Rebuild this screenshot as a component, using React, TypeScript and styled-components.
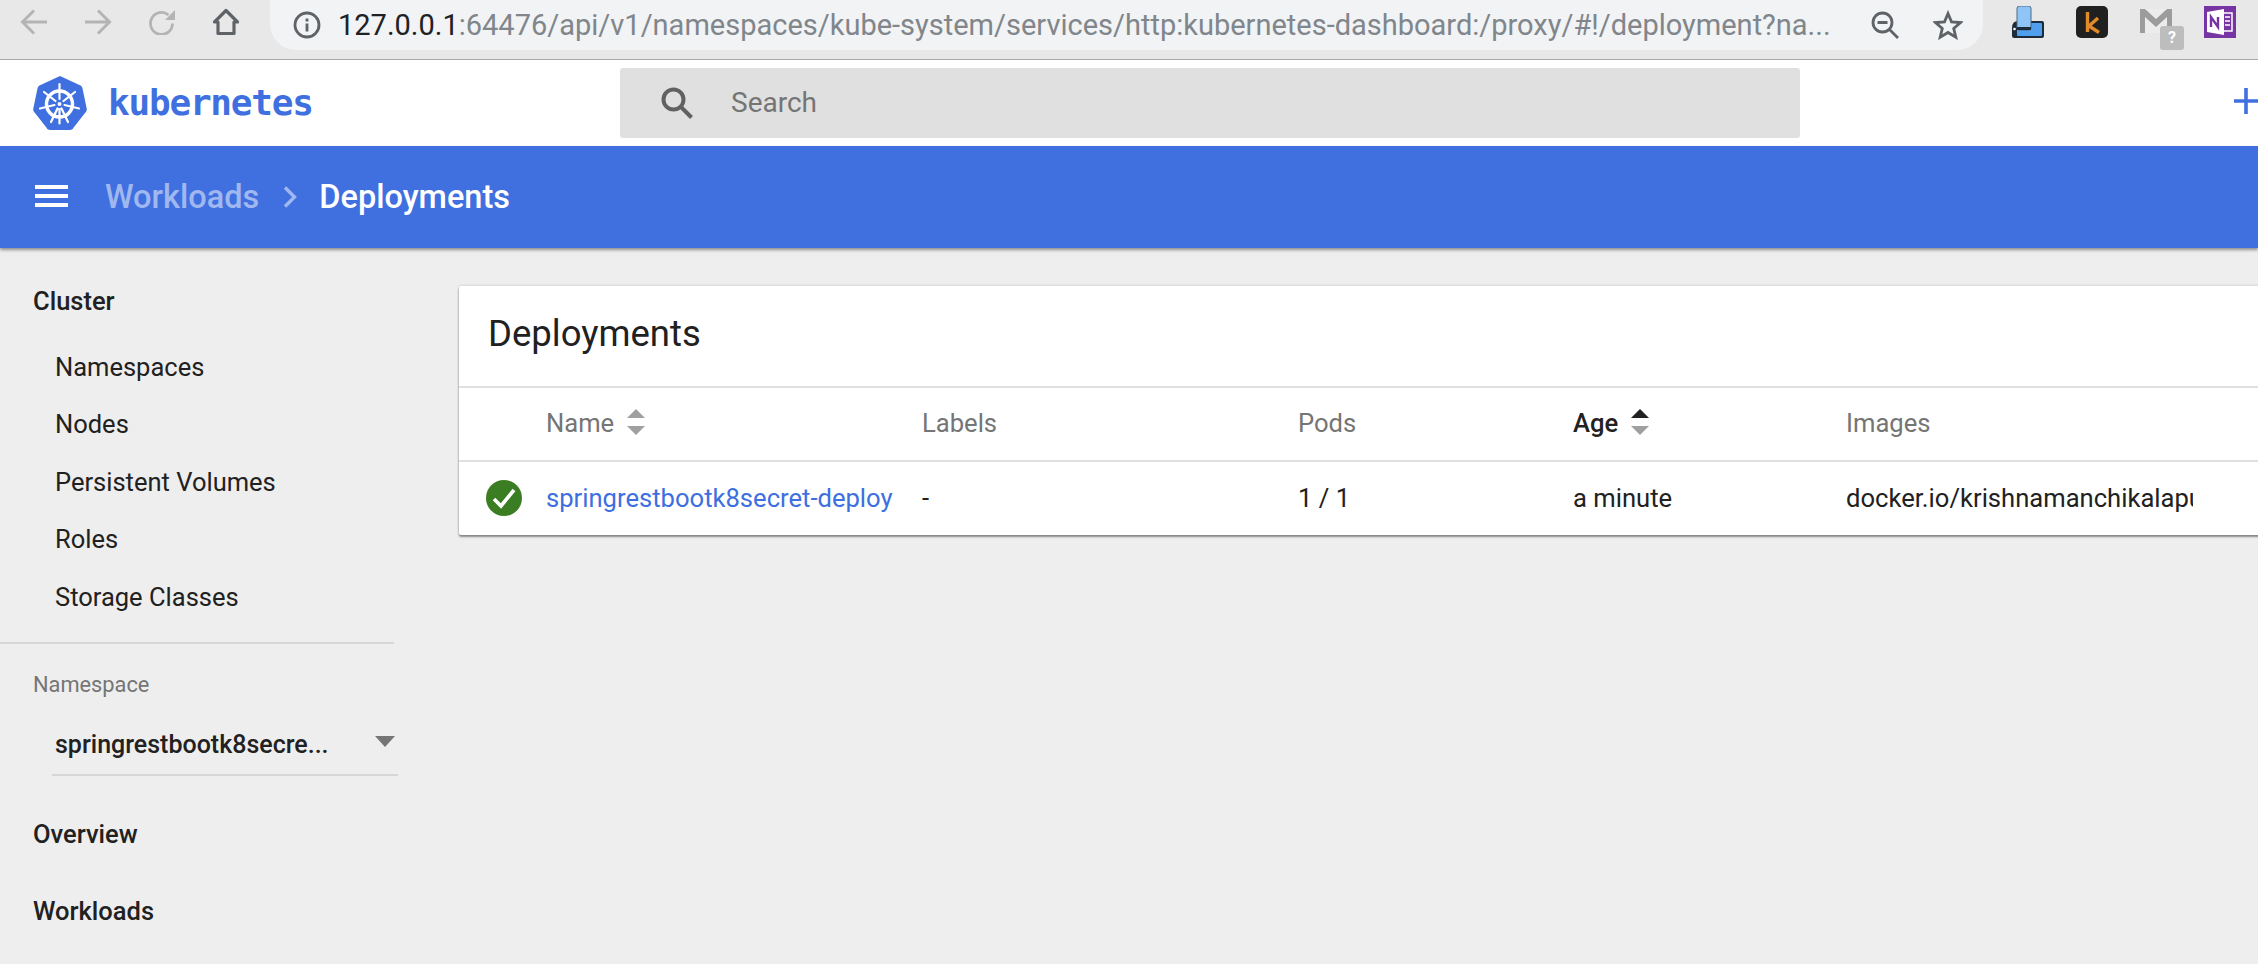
import React from "react";
import styled, { createGlobalStyle } from "styled-components";

const GlobalStyle = createGlobalStyle`
  html, body {
    margin: 0;
    padding: 0;
    height: 100%;
    overflow: hidden;
    background: #eeeeee;
  }
  body {
    font-family: Roboto, "Liberation Sans", sans-serif;
    color: #212121;
  }
`;

const Page = styled.div`
  width: 2258px;
  height: 964px;
  display: flex;
  flex-direction: column;
  overflow: hidden;
`;

/* browser chrome */
const BrowserBar = styled.div`
  height: 60px;
  flex: none;
  box-sizing: border-box;
  display: flex;
  align-items: flex-start;
  padding-left: 2px;
  background: #e8e8e8;
  border-bottom: 1px solid #a8a8a8;
`;

const NavButton = styled.div<{ $dark?: boolean }>`
  width: 64px;
  height: 44px;
  flex: none;
  display: flex;
  align-items: center;
  justify-content: center;
  color: ${(p) => (p.$dark ? "#5f6368" : "#b4b4b4")};
`;

const UrlBar = styled.div`
  width: 1713px;
  height: 50px;
  flex: none;
  margin-left: 12px;
  display: flex;
  align-items: center;
  padding: 0 12px 0 23px;
  box-sizing: border-box;
  gap: 17px;
  background: #f1f3f4;
  border-radius: 0 0 26px 26px;
  color: #5f6368;
`;

const UrlText = styled.div`
  flex: 1;
  font-size: 29px;
  color: #80868b;
  white-space: nowrap;
  overflow: hidden;
  b {
    font-weight: 400;
    color: #202124;
  }
`;

const UrlAction = styled.div`
  width: 46px;
  display: flex;
  justify-content: center;
  color: #5f6368;
`;

const Extensions = styled.div`
  display: flex;
  gap: 32px;
  margin-left: 29px;
  padding-top: 6px;
`;

const Extension = styled.div`
  position: relative;
  width: 32px;
  height: 32px;
`;

const ExtensionBadge = styled.span`
  position: absolute;
  left: 20px;
  top: 20px;
  width: 24px;
  height: 24px;
  border-radius: 3px;
  background: #bdbdbd;
  color: #fff;
  font-size: 16px;
  font-weight: 700;
  text-align: center;
  line-height: 24px;
`;

/* dashboard header */
const TopBar = styled.header`
  height: 86px;
  flex: none;
  display: flex;
  align-items: center;
  background: #fff;
  padding-left: 33px;
`;

const Brand = styled.div`
  width: 587px;
  flex: none;
  display: flex;
  align-items: center;
  gap: 21px;
  color: #4070e0;
`;

const BrandName = styled.span`
  font-family: "DejaVu Sans Mono", monospace;
  font-size: 36px;
  font-weight: 700;
  letter-spacing: -1.2px;
  line-height: 1;
`;

const SearchBox = styled.div`
  width: 1180px;
  height: 70px;
  flex: none;
  margin-top: -1px;
  display: flex;
  align-items: center;
  gap: 38px;
  padding-left: 41px;
  box-sizing: border-box;
  background: #e0e0e0;
  border-radius: 3px;
  color: #757575;
  font-size: 28px;
`;

const AddButton = styled.div`
  margin-left: auto;
  margin-top: -4px;
  display: flex;
`;

const ActionBar = styled.div`
  height: 102px;
  flex: none;
  display: flex;
  align-items: center;
  padding-left: 35px;
  background: #4070e0;
  color: #fff;
  box-shadow: 0 2px 3px rgba(0, 0, 0, 0.4);
  position: relative;
`;

const Crumb = styled.span<{ $muted?: boolean }>`
  font-size: 32.5px;
  font-weight: 500;
  color: ${(p) => (p.$muted ? "#a0b8ef" : "#fff")};
`;

const CrumbSeparator = styled.span`
  display: flex;
  margin: 0 22px 0 24px;
`;

const MenuButton = styled.div`
  display: flex;
  width: 70px;
  margin-top: -3px;
`;

/* body */
const Main = styled.div`
  flex: 1;
  display: flex;
  min-height: 0;
`;

const Sidebar = styled.nav`
  width: 459px;
  flex: none;
  padding-top: 24px;
  box-sizing: border-box;
`;

const SectionLink = styled.div<{ $tall?: boolean }>`
  height: ${(p) => (p.$tall ? "77px" : "58px")};
  display: flex;
  align-items: center;
  padding-left: 33px;
  font-size: 25.5px;
  font-weight: 500;
`;

const NavList = styled.div`
  margin-top: 8px;
`;

const NavItem = styled.div`
  height: 57.5px;
  display: flex;
  align-items: center;
  padding-left: 55px;
  font-size: 25.5px;
`;

const Divider = styled.div`
  width: 394px;
  height: 2px;
  margin-top: 16px;
  background: #d6d6d6;
`;

const NamespaceLabel = styled.div`
  margin-top: 27px;
  padding-left: 33px;
  font-size: 21.8px;
  line-height: 28px;
  color: #757575;
`;

const NamespaceSelect = styled.div`
  width: 346px;
  height: 60px;
  margin: 17px 0 20px 52px;
  box-sizing: border-box;
  display: flex;
  align-items: center;
  justify-content: space-between;
  padding: 0 3px 0 3px;
  border-bottom: 2px solid #d6d6d6;
  font-size: 25px;
  font-weight: 500;
`;

const SelectArrow = styled.span`
  width: 0;
  height: 0;
  margin-bottom: 6px;
  border-left: 10px solid transparent;
  border-right: 10px solid transparent;
  border-top: 11px solid #757575;
`;

const Card = styled.section`
  width: 1850px;
  height: 249px;
  flex: none;
  margin-top: 38px;
  background: #fff;
  border-radius: 2px;
  box-shadow: 0 2px 2px rgba(0, 0, 0, 0.4), 0 0 3px rgba(0, 0, 0, 0.2);
`;

const CardTitle = styled.h2`
  height: 102px;
  margin: 0;
  padding: 0 0 6px 29px;
  box-sizing: border-box;
  display: flex;
  align-items: center;
  border-bottom: 2px solid #e0e0e0;
  font-size: 36.5px;
  font-weight: 400;
`;

const Row = styled.div<{ $head?: boolean }>`
  height: 74px;
  padding-bottom: 2px;
  display: grid;
  grid-template-columns: 87px 376px 376px 275px 273px 347px;
  align-items: center;
  border-bottom: ${(p) => (p.$head ? "2px solid #e0e0e0" : "none")};
  box-sizing: border-box;
`;

const Cell = styled.div<{ $head?: boolean; $active?: boolean }>`
  display: flex;
  align-items: center;
  gap: 13px;
  overflow: hidden;
  white-space: nowrap;
  font-size: 25.6px;
  font-weight: ${(p) => (p.$active ? 500 : 400)};
  color: ${(p) => (p.$head && !p.$active ? "#757575" : "#212121")};
`;

const NameLink = styled.a`
  color: #3d6fe0;
`;

const StatusCell = styled.div`
  display: flex;
  justify-content: flex-end;
  padding-right: 24px;
`;

const SortSvg = styled.svg`
  flex: none;
  margin-top: -2px;
`;

const SortIcon = ({ active }: { active?: boolean }) => (
  <SortSvg width="18" height="26" viewBox="0 0 18 26">
    <path d="M9 0 L18 9 H0 Z" fill={active ? "#212121" : "#a0a0a0"} />
    <path d="M9 26 L18 17 H0 Z" fill="#a0a0a0" />
  </SortSvg>
);

const BackIcon = () => (
  <svg width="28" height="26" viewBox="0 0 28 26" fill="none" stroke="currentColor" strokeWidth="3">
    <path d="M27 13 H3 M14 1.500 L2.500 13 L14 24.500" />
  </svg>
);

const ForwardIcon = () => (
  <svg width="28" height="26" viewBox="0 0 28 26" fill="none" stroke="currentColor" strokeWidth="3">
    <path d="M1 13 H25 M14 1.500 L25.500 13 L14 24.500" />
  </svg>
);

const ReloadIcon = () => (
  <svg width="28" height="26" viewBox="0 0 28 26">
    <path d="M20.500 6 A11 11 0 1 0 24.500 14.500" fill="none" stroke="currentColor" strokeWidth="2.800" />
    <path d="M27 1 V11 H17 Z" fill="currentColor" />
  </svg>
);

const HomeIcon = () => (
  <svg width="28" height="28" viewBox="0 0 28 28" fill="none" stroke="currentColor" strokeWidth="3.200" strokeLinejoin="round">
    <path d="M14 2.500 L25.500 14 H22 V25.500 H6 V14 H2.500 Z" />
  </svg>
);

const InfoIcon = () => (
  <svg width="28" height="28" viewBox="0 0 28 28">
    <circle cx="14" cy="14" r="12" fill="none" stroke="currentColor" strokeWidth="2.800" />
    <rect x="12.600" y="12.500" width="2.800" height="8" fill="currentColor" />
    <rect x="12.600" y="7.500" width="2.800" height="3" fill="currentColor" />
  </svg>
);

const ZoomOutIcon = () => (
  <svg width="28" height="28" viewBox="0 0 28 28" fill="none" stroke="currentColor" strokeWidth="2.800">
    <circle cx="11.500" cy="11.500" r="9.500" />
    <path d="M6.500 11.500 H16.500 M18.500 18.500 L27 27" />
  </svg>
);

const StarIcon = () => (
  <svg width="30" height="30" viewBox="0 0 30 30" fill="none" stroke="currentColor" strokeWidth="2.800">
    <path d="M15 3.500 L18.500 11.800 L27.500 12.500 L20.700 18.400 L22.800 27.200 L15 22.500 L7.200 27.200 L9.300 18.400 L2.500 12.500 L11.500 11.800 Z" />
  </svg>
);

const SearchIcon = () => (
  <svg width="32" height="32" viewBox="0 0 32 32" fill="none" stroke="currentColor" strokeWidth="4" color="#616161">
    <circle cx="12.500" cy="12.500" r="10" />
    <path d="M20 20 L30.500 30.500" />
  </svg>
);

const PlusIcon = () => (
  <svg width="24" height="26" viewBox="0 0 24 26" fill="none" stroke="#4070e0" strokeWidth="3.600">
    <path d="M0 13 H24 M12 0 V26" />
  </svg>
);

const MenuIcon = () => (
  <svg width="33" height="22" viewBox="0 0 33 22" fill="#fff">
    <rect y="0" width="33" height="4" />
    <rect y="9" width="33" height="4" />
    <rect y="18" width="33" height="4" />
  </svg>
);

const CrumbChevron = () => (
  <svg width="14" height="22" viewBox="0 0 14 22" fill="none" stroke="#a0b8ef" strokeWidth="3.400">
    <path d="M2 1.500 L11.500 11 L2 20.500" />
  </svg>
);

const KubeLogo = () => (
  <svg width="54" height="54" viewBox="0 0 54 54">
    <path d="M27 0 L47.500 9.500 Q49 10.200 49.400 12 L53.800 33 Q54 34.500 53 35.800 L41 51 Q39.800 54 37.500 54 H16.500 Q14.200 54 13 51 L1 35.800 Q0 34.500 .2 33 L4.600 12 Q5 10.200 6.500 9.500 Z" fill="#4070e0" />
    <g fill="none" stroke="#fff" strokeLinecap="round">
      <circle cx="26.500" cy="28" r="13" strokeWidth="3.400" />
      <path strokeWidth="2.200" d="M26.500 8 V23 M26.500 33 V47.500 M11 16 L22.500 25 M42 16 L30.500 25 M7 32.500 L21.500 29 M46 32.500 L31.500 29 M18 46 L24.500 32.500 M35 46 L28.500 32.500" />
    </g>
    <circle cx="26.500" cy="28" r="2" fill="#fff" />
  </svg>
);

const StatusIcon = () => (
  <svg width="36" height="36" viewBox="0 0 36 36">
    <circle cx="18" cy="18" r="18" fill="#3a7d22" />
    <path d="M8 19 L15 26 L28 10" fill="none" stroke="#fff" strokeWidth="3.600" />
  </svg>
);

const DeviceExtension = () => (
  <svg width="32" height="32" viewBox="0 0 32 32">
    <path d="M0 22 Q0 15 6 15 H30 Q32 15 32 17 V30 Q32 32 30 32 H2 Q0 32 0 30 Z" fill="#1d2c3b" />
    <rect x="5" y="17" width="25" height="13" rx="1" fill="#4f9fee" />
    <rect x="5" y="0" width="14" height="24" rx="2.500" fill="#8fc4f6" stroke="#4d6a85" strokeWidth="1" />
    <rect x="5" y="21" width="14" height="3" fill="#1d2c3b" />
    <circle cx="2.500" cy="23" r="1.300" fill="#fff" />
  </svg>
);

const KExtension = () => (
  <svg width="32" height="32" viewBox="0 0 32 32">
    <rect width="32" height="32" rx="5" fill="#202020" />
    <path d="M11.500 6 V26 M22 12 L13 20 L23 26.500" fill="none" stroke="#e08a28" strokeWidth="3.400" />
  </svg>
);

const GmailSvg = styled.svg`
  display: block;
  margin-top: 3px;
`;

const GmailExtension = () => (
  <GmailSvg width="32" height="24" viewBox="0 0 32 24">
    <rect width="32" height="24" fill="#ececec" />
    <path d="M0 0 H5 L16 10 L27 0 H32 V24 H27 V8 L16 18 L5 8 V24 H0 Z" fill="#9c9c9c" />
  </GmailSvg>
);

const NoteExtension = () => (
  <svg width="32" height="32" viewBox="0 0 32 32">
    <rect width="32" height="32" fill="#7635a3" />
    <path d="M18 7 H28 V25 H18 Z" fill="none" stroke="#fff" strokeWidth="1.500" />
    <path d="M21 11 H26 M21 15 H26 M21 19 H26" stroke="#fff" strokeWidth="1.500" />
    <path d="M3 6 L20 3 V29 L3 26 Z" fill="#fff" />
    <path d="M7 21 V11 L14 21 V11" fill="none" stroke="#7635a3" strokeWidth="2.400" />
  </svg>
);

export default function App() {
  return (
    <Page>
      <GlobalStyle />
      <BrowserBar>
        <NavButton><BackIcon /></NavButton>
        <NavButton><ForwardIcon /></NavButton>
        <NavButton><ReloadIcon /></NavButton>
        <NavButton $dark><HomeIcon /></NavButton>
        <UrlBar>
          <InfoIcon />
          <UrlText>
            <b>127.0.0.1</b>:64476/api/v1/namespaces/kube-system/services/http:kubernetes-dashboard:/proxy/#!/deployment?na...
          </UrlText>
          <UrlAction><ZoomOutIcon /></UrlAction>
          <UrlAction><StarIcon /></UrlAction>
        </UrlBar>
        <Extensions>
          <Extension><DeviceExtension /></Extension>
          <Extension><KExtension /></Extension>
          <Extension>
            <GmailExtension />
            <ExtensionBadge>?</ExtensionBadge>
          </Extension>
          <Extension><NoteExtension /></Extension>
        </Extensions>
      </BrowserBar>

      <TopBar>
        <Brand>
          <KubeLogo />
          <BrandName>kubernetes</BrandName>
        </Brand>
        <SearchBox>
          <SearchIcon />
          Search
        </SearchBox>
        <AddButton><PlusIcon /></AddButton>
      </TopBar>

      <ActionBar>
        <MenuButton><MenuIcon /></MenuButton>
        <Crumb $muted>Workloads</Crumb>
        <CrumbSeparator><CrumbChevron /></CrumbSeparator>
        <Crumb>Deployments</Crumb>
      </ActionBar>

      <Main>
        <Sidebar>
          <SectionLink>Cluster</SectionLink>
          <NavList>
            <NavItem>Namespaces</NavItem>
            <NavItem>Nodes</NavItem>
            <NavItem>Persistent Volumes</NavItem>
            <NavItem>Roles</NavItem>
            <NavItem>Storage Classes</NavItem>
          </NavList>
          <Divider />
          <NamespaceLabel>Namespace</NamespaceLabel>
          <NamespaceSelect>
            springrestbootk8secre...
            <SelectArrow />
          </NamespaceSelect>
          <SectionLink $tall>Overview</SectionLink>
          <SectionLink $tall>Workloads</SectionLink>
        </Sidebar>
        <Card>
          <CardTitle>Deployments</CardTitle>
          <Row $head>
            <div />
            <Cell $head>Name <SortIcon /></Cell>
            <Cell $head>Labels</Cell>
            <Cell $head>Pods</Cell>
            <Cell $head $active>Age <SortIcon active /></Cell>
            <Cell $head>Images</Cell>
          </Row>
          <Row>
            <StatusCell><StatusIcon /></StatusCell>
            <Cell><NameLink>springrestbootk8secret-deploy</NameLink></Cell>
            <Cell>-</Cell>
            <Cell>1 / 1</Cell>
            <Cell>a minute</Cell>
            <Cell>docker.io/krishnamanchikalapudi/springrestbootk8secret</Cell>
          </Row>
        </Card>
      </Main>
    </Page>
  );
}
